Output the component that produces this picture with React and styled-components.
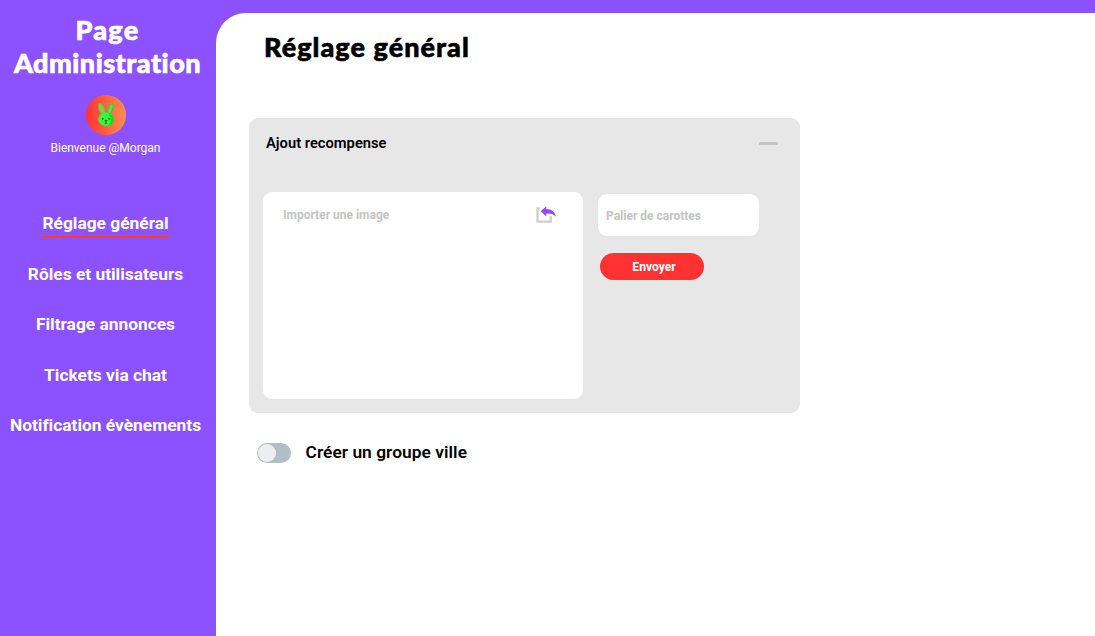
import React from 'react';
import styled, { createGlobalStyle } from 'styled-components';

const GlobalStyle = createGlobalStyle`
  * { box-sizing: border-box; }
  body { margin: 0; background: #8c52ff; font-family: Roboto, "Liberation Sans", sans-serif; font-variant-ligatures: none; }
`;

const Page = styled.div`
  display: flex;
  height: 636px;
  overflow: hidden;
  background: #8c52ff;
`;

const Sidebar = styled.aside`
  width: 216px;
  flex: none;
  display: flex;
  flex-direction: column;
  align-items: center;
  padding: 13px 5px 0 0;
  color: #fff;
`;

const Brand = styled.h1`
  margin: 0;
  padding-left: 4px;
  font: 900 27px/33px Lato, sans-serif;
  letter-spacing: 0.5px;
  -webkit-text-stroke: 0.7px currentColor;
  text-align: center;
`;

const Letters = styled.span`
  letter-spacing: 1.3px;
`;

const Avatar = styled.div`
  width: 40px;
  height: 40px;
  margin-top: 16px;
  border-radius: 50%;
  background: linear-gradient(90deg, #ff3131, #ff914d);
  svg { display: block; }
`;

const Welcome = styled.p`
  margin: 5px 0 0;
  font-size: 12px;
  line-height: 16px;
`;

const Nav = styled.nav`
  display: flex;
  flex-direction: column;
  align-items: center;
  margin-top: 55px;
  gap: 22.5px;
`;

const NavItem = styled.a`
  height: 27px;
  margin-bottom: 1px;
  line-height: 24px;
  font-size: 17.35px;
  font-weight: 700;
  white-space: nowrap;
  border-bottom: 2px solid ${({ $active }) => ($active ? '#ff3b1f' : 'transparent')};
`;

const Main = styled.main`
  flex: 1;
  margin-top: 13px;
  padding: 16px 0 0 33px;
  background: #fff;
  border-top-left-radius: 30px;
`;

const Title = styled.h2`
  margin: 0 0 0 15px;
  height: 89px;
  font: 900 27px/36px Lato, sans-serif;
  letter-spacing: 1.05px;
  -webkit-text-stroke: 0.6px currentColor;
  color: #000;
`;

const Card = styled.section`
  width: 551px;
  height: 295px;
  padding: 0 14px;
  border-radius: 9px;
  background: #e7e7e7;
`;

const CardHeader = styled.header`
  display: flex;
  justify-content: space-between;
  align-items: center;
  height: 50px;
  padding: 0 8px 0 3px;
  margin-bottom: 24px;
  font-size: 14.72px;
  font-weight: 600;
`;

const Collapse = styled.span`
  width: 19px;
  height: 3px;
  border-radius: 1px;
  background: #c4c4c4;
`;

const CardBody = styled.div`
  display: flex;
  gap: 15px;
`;

const DropZone = styled.div`
  display: flex;
  justify-content: space-between;
  align-items: flex-start;
  width: 320px;
  height: 207px;
  padding: 13px 26px 0 20px;
  border-radius: 9px;
  background: #fff;
  color: #c4c4c4;
  font-size: 12px;
  line-height: 20px;
  font-weight: 700;
`;

const Fields = styled.div`
  display: flex;
  flex-direction: column;
  padding-top: 2px;
`;

const Field = styled.div`
  width: 161px;
  height: 42px;
  padding-left: 8px;
  border-radius: 9px;
  background: #fff;
  color: #c4c4c4;
  font-size: 12px;
  line-height: 44px;
  font-weight: 700;
`;

const Submit = styled.button`
  width: 104px;
  height: 27px;
  margin: 17px 0 0 2px;
  padding: 1px 0 0 4px;
  border: 0;
  border-radius: 14px;
  background: #ff3131;
  color: #fff;
  font: 700 12.1px/27px Roboto, sans-serif;
`;

const ToggleRow = styled.div`
  display: flex;
  align-items: center;
  gap: 14.5px;
  margin: 27px 0 0 8px;
  height: 24px;
  font-size: 17.33px;
  font-weight: 600;
  letter-spacing: 0.05px;
`;

const Switch = styled.span`
  display: flex;
  align-items: center;
  width: 34px;
  height: 20px;
  margin-top: 2px;
  padding-left: 1px;
  border-radius: 10px;
  background: #b0bec5;
  &::before {
    content: '';
    width: 18px;
    height: 18px;
    border-radius: 50%;
    background: #eceff1;
  }
`;

const Rabbit = () => (
  <svg width="40" height="40" viewBox="0 0 40 40">
    <ellipse cx="15.7" cy="14.2" rx="2.9" ry="6.2" transform="rotate(-20 15.7 14.2)" fill="#23f52f" />
    <ellipse cx="24.3" cy="14.2" rx="2.9" ry="6.2" transform="rotate(20 24.3 14.2)" fill="#0bea20" />
    <ellipse cx="15.6" cy="14" rx="1.5" ry="4.4" transform="rotate(-20 15.6 14)" fill="#c9a46a" />
    <ellipse cx="24.4" cy="14" rx="1.5" ry="4.4" transform="rotate(20 24.4 14)" fill="#c9a46a" />
    <ellipse cx="20" cy="24.3" rx="7.6" ry="6.7" fill="#2cff38" />
    <path d="M22.2 17.9c3.4.8 5.4 3.5 5.4 6.6 0 3.500-2.300 6.100-6.300 6.400 4-2.500 4.500-8.500.9-13z" fill="#05e51d" />
    <circle cx="16.8" cy="23.9" r=".8" fill="#174d20" />
    <circle cx="23.2" cy="23.9" r=".8" fill="#174d20" />
    <path d="M18.7 25.3h2.600L20 26.800zM20 26.500v1.700m-1.400.2 1.400-.5 1.400.5" fill="#604333" stroke="#604333" strokeWidth=".7" />
  </svg>
);

const ImportIcon = () => (
  <svg width="22" height="20" viewBox="0 0 22 20">
    <path d="M5 3.400H2.500v13.200h13.200V11" fill="none" stroke="#cfcfcf" strokeWidth="2.300" />
    <path d="M5.600 6.200 11.300 1.200v2.700c5.400 0 8.800 2.800 9.700 8-2.400-2.700-5.500-3.600-9.700-3.200V11.200z" fill="#9747ff" />
  </svg>
);

const links = [
  'Réglage général',
  'Rôles et utilisateurs',
  'Filtrage annonces',
  'Tickets via chat',
  'Notification évènements',
];

export default function App() {
  return (
    <Page>
      <GlobalStyle />
      <Sidebar>
        <Brand><Letters>Page</Letters><br />Administration</Brand>
        <Avatar><Rabbit /></Avatar>
        <Welcome>Bienvenue @Morgan</Welcome>
        <Nav>
          {links.map((label, i) => (
            <NavItem key={label} $active={i === 0}>{label}</NavItem>
          ))}
        </Nav>
      </Sidebar>
      <Main>
        <Title>Réglage général</Title>
        <Card>
          <CardHeader>
            Ajout recompense
            <Collapse />
          </CardHeader>
          <CardBody>
            <DropZone>
              Importer une image
              <ImportIcon />
            </DropZone>
            <Fields>
              <Field>Palier de carottes</Field>
              <Submit>Envoyer</Submit>
            </Fields>
          </CardBody>
        </Card>
        <ToggleRow>
          <Switch />
          Créer un groupe ville
        </ToggleRow>
      </Main>
    </Page>
  );
}
